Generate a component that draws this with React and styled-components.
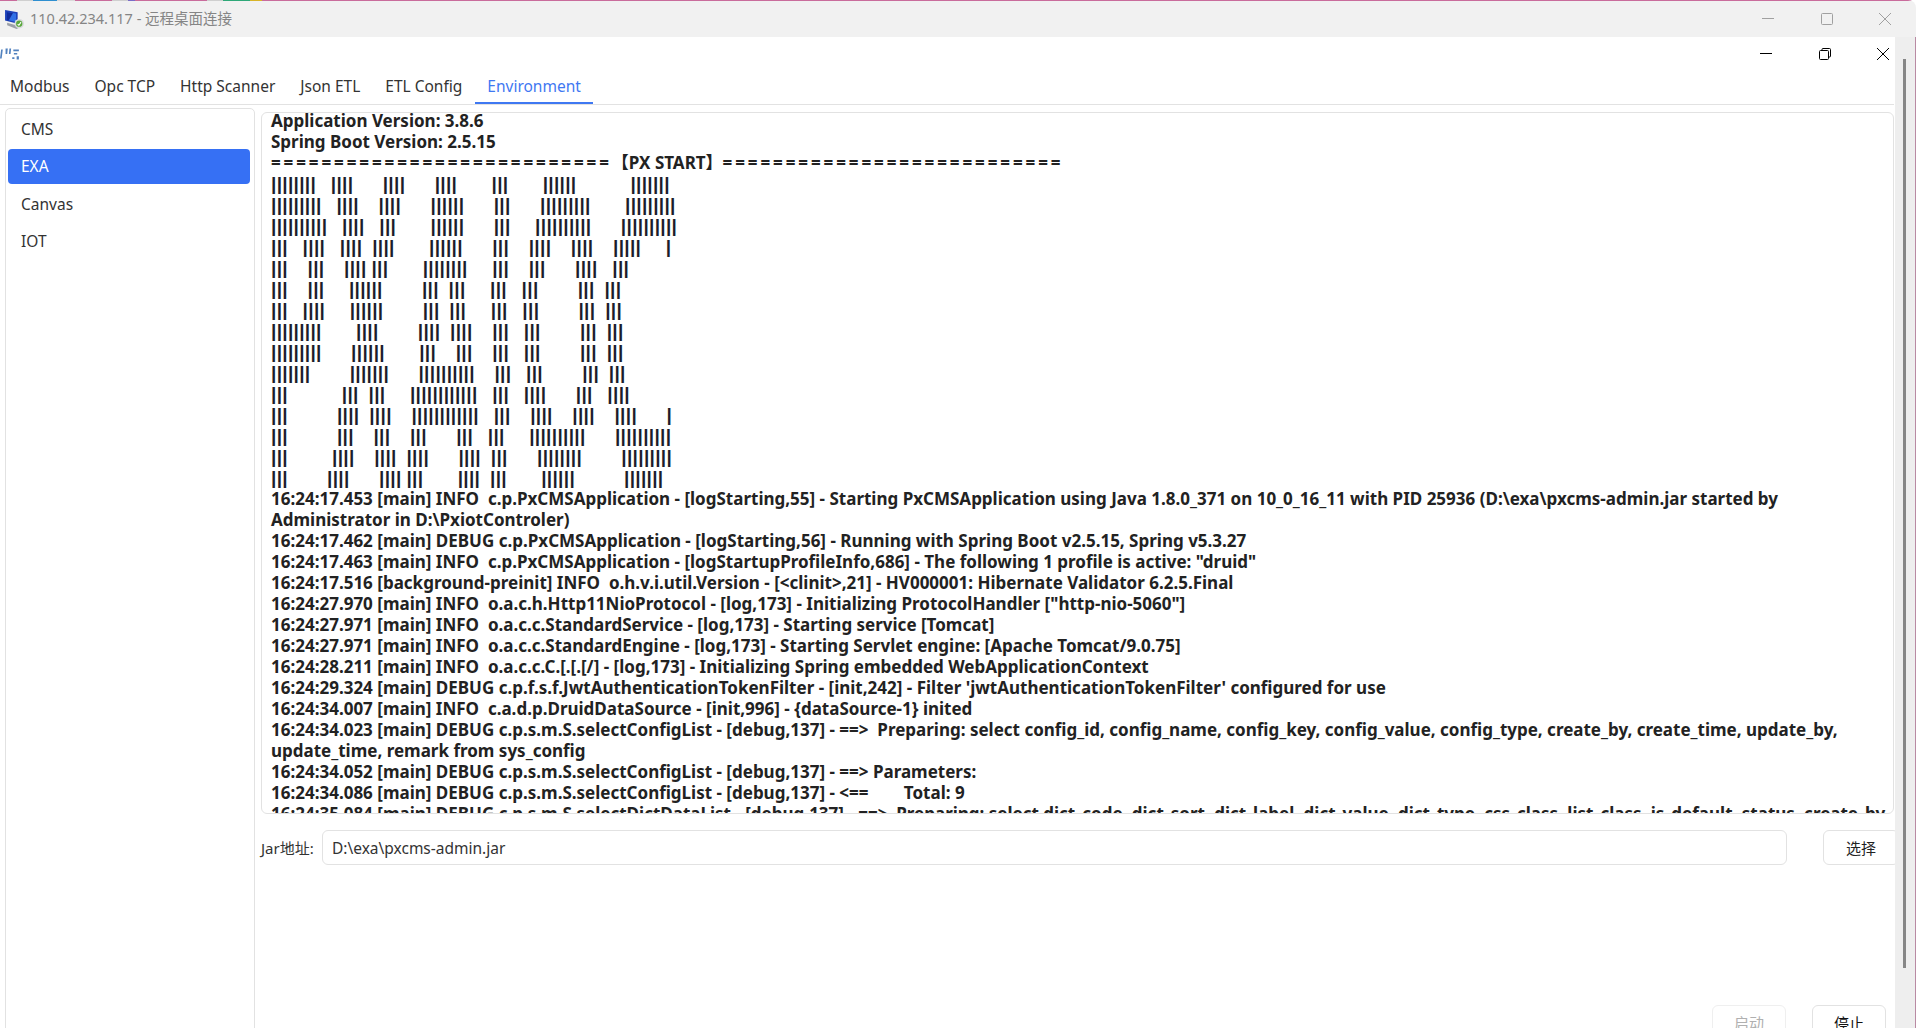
import React from 'react'
import styled, { createGlobalStyle } from 'styled-components'

const BAR_FONT = '"Liberation Sans", sans-serif'
const UI_FONT = '"Noto Sans", "Noto Sans CJK SC", sans-serif'

const GlobalStyle = createGlobalStyle`
  html, body {
    margin: 0;
    padding: 0;
    height: 100%;
    overflow: hidden;
    background: #fff;
  }
  * {
    box-sizing: border-box;
  }
`

const Page = styled.div`
  width: 1916px;
  height: 1028px;
  display: flex;
  flex-direction: column;
  overflow: hidden;
  font-family: ${UI_FONT};
  color: #333;
`
const RemoteBar = styled.div`
  height: 37px;
  flex: none;
  display: flex;
  align-items: center;
  padding: 1px 25px 0 4px;
  background: linear-gradient(#c96c9c, #c96c9c) no-repeat top / 100% 1px, #f1f1f1;
  border-top-right-radius: 8px;
  position: relative;
`
const ColorStrip = styled.div`
  position: absolute;
  top: 0;
  left: 0;
  height: 1px;
  width: 262px;
  background: linear-gradient(
    90deg,
    #c96c9c 0 17px,
    #cfcfcf 17px 33px,
    #2f8fd0 33px 57px,
    #d9d9d9 57px 75px,
    #c96c9c 75px 112px,
    #cfcfcf 112px 128px,
    #7a6cc8 128px 135px,
    #c96c9c 135px 207px,
    #cfcfcf 207px 223px,
    #2fa878 223px 250px,
    #d8b428 250px 262px
  );
`
const RemoteTitle = styled.span`
  margin-left: 5px;
  padding-bottom: 3px;
  font-size: 14.5px;
  color: #858585;
`
const WindowButtons = styled.div`
  margin-left: auto;
  display: flex;
  align-items: center;
  gap: 46.5px;
`
const Body = styled.div`
  flex: 1;
  min-height: 0;
  display: flex;
`
const AppWindow = styled.div`
  width: 1895px;
  flex: none;
  display: flex;
  flex-direction: column;
  background: #fff;
`
const Track = styled.div`
  flex: 1;
  padding: 22px 0 0 8px;
  background: #eee;
  border-right: 1px solid #b98aa3;
`
const Thumb = styled.div`
  width: 3px;
  height: 909px;
  background: #868686;
`
const AppHeader = styled.div`
  height: 33px;
  flex: none;
  display: flex;
  align-items: center;
  padding: 0 6px 0 0;
`
const TabBar = styled.div`
  height: 35px;
  flex: none;
  width: 1894px;
  display: flex;
  border-bottom: 1px solid #e2e2e2;
`
const Tab = styled.div`
  height: 34px;
  padding: 0 12.5px;
  display: flex;
  align-items: center;
  font-size: 15.5px;
  color: ${(p) => (p.$active ? '#3f78f2' : '#333')};
  border-bottom: 2px solid ${(p) => (p.$active ? '#3f78f2' : 'transparent')};
  &:first-child {
    padding-left: 10px;
  }
`
const Main = styled.div`
  flex: 1;
  min-height: 0;
  display: flex;
  padding-left: 5px;
`
const Nav = styled.nav`
  width: 250px;
  flex: none;
  margin-top: 3px;
  margin-bottom: -10px;
  padding: 3px 4px 3px 2px;
  border: 1px solid #e2e2e2;
  border-radius: 5px 5px 0 0;
  display: flex;
  flex-direction: column;
  gap: 2.3px;
`
const NavItem = styled.div`
  height: 35px;
  padding: 0 0 1px 13px;
  display: flex;
  align-items: center;
  font-size: 15.5px;
  border-radius: 4px;
  color: ${(p) => (p.$active ? '#fff' : '#333')};
  background: ${(p) => (p.$active ? '#3670f4' : 'transparent')};
`
const Content = styled.div`
  flex: 1;
  min-width: 0;
  padding: 7px 0 0 6px;
  overflow: hidden;
`
const LogBox = styled.div`
  width: 1633px;
  height: 702px;
  padding: 0 0 0 9px;
  border: 1px solid #e2e2e2;
  border-radius: 6px;
  overflow: hidden;
  font-size: 17px;
  font-weight: 700;
  line-height: 21px;
  color: #222;
`
const LogText = styled.div`
  margin-top: -3px;
`
const LogLine = styled.div`
  white-space: pre-wrap;
`
const Rule = styled.div`
  white-space: pre;
`
const RuleMark = styled.span`
  letter-spacing: 2.9px;
`
const ArtLine = styled.div`
  height: 21px;
  white-space: pre;
  font-family: ${BAR_FONT};
  font-size: 19px;
  line-height: 21px;
  letter-spacing: 0.32px;
  word-spacing: -0.7px;
  color: #1c1c2c;
`
const JarRow = styled.div`
  margin-top: 16px;
  display: flex;
  align-items: center;
  width: 1720px;
`
const JarLabel = styled.label`
  width: 61px;
  flex: none;
  font-size: 15px;
`
const JarInput = styled.input`
  width: 1465px;
  height: 35px;
  flex: none;
  padding: 0 9px;
  border: 1px solid #e2e2e2;
  border-radius: 6px;
  outline: none;
  font-family: ${UI_FONT};
  font-size: 15.5px;
  color: #333;
`
const PickButton = styled.button`
  width: 76px;
  height: 35px;
  flex: none;
  margin-left: 36px;
  border: 1px solid #e2e2e2;
  border-radius: 6px;
  background: #fff;
  font-family: ${UI_FONT};
  font-size: 15px;
  color: #222;
`
const ActionRow = styled.div`
  margin-top: 140px;
  padding-right: 9px;
  display: flex;
  justify-content: flex-end;
  gap: 26px;
`
const ActionButton = styled.button`
  width: 74px;
  height: 35px;
  border: 1px solid ${(p) => (p.disabled ? '#efefef' : '#e2e2e2')};
  border-radius: 6px;
  background: #fff;
  font-family: ${UI_FONT};
  font-size: 15px;
  color: ${(p) => (p.disabled ? '#b0b0b0' : '#111')};
`

const TABS = ['Modbus', 'Opc TCP', 'Http Scanner', 'Json ETL', 'ETL Config', 'Environment']
const NAV = ['CMS', 'EXA', 'Canvas', 'IOT']

// alternating run lengths: bars, spaces, bars, ...
const ART = [
  [8, 3, 4, 6, 4, 6, 4, 7, 3, 7, 6, 11, 7],
  [9, 3, 4, 4, 4, 6, 6, 6, 3, 6, 9, 7, 9],
  [10, 3, 4, 3, 3, 7, 6, 6, 3, 5, 10, 6, 10],
  [3, 3, 4, 3, 4, 2, 4, 7, 6, 6, 3, 4, 4, 4, 4, 4, 5, 5, 1],
  [3, 4, 3, 4, 4, 1, 3, 7, 8, 5, 3, 4, 3, 6, 4, 3, 3],
  [3, 4, 3, 5, 6, 8, 3, 2, 3, 5, 3, 3, 3, 8, 3, 2, 3],
  [3, 3, 4, 5, 6, 8, 3, 2, 3, 5, 3, 3, 3, 8, 3, 2, 3],
  [9, 7, 4, 8, 4, 2, 4, 4, 3, 3, 3, 8, 3, 2, 3],
  [9, 6, 6, 7, 3, 4, 3, 4, 3, 3, 3, 8, 3, 2, 3],
  [7, 8, 7, 6, 10, 4, 3, 3, 3, 8, 3, 2, 3],
  [3, 11, 3, 2, 3, 5, 12, 3, 3, 3, 4, 6, 3, 3, 4],
  [3, 10, 4, 2, 4, 4, 12, 3, 3, 4, 4, 4, 4, 4, 4, 6, 1],
  [3, 10, 3, 4, 3, 4, 3, 6, 3, 3, 3, 5, 10, 6, 10],
  [3, 9, 4, 4, 4, 2, 4, 6, 4, 2, 3, 6, 8, 8, 9],
  [3, 8, 4, 6, 4, 1, 3, 7, 4, 2, 3, 7, 6, 10, 7],
]

const artText = (runs) =>
  runs.map((n, i) => (i % 2 === 0 ? '|' : ' ').repeat(n)).join('')

const LOGS = [
  '16:24:17.453 [main] INFO  c.p.PxCMSApplication - [logStarting,55] - Starting PxCMSApplication using Java 1.8.0_371 on 10_0_16_11 with PID 25936 (D:\\exa\\pxcms-admin.jar started by Administrator in D:\\PxiotControler)',
  '16:24:17.462 [main] DEBUG c.p.PxCMSApplication - [logStarting,56] - Running with Spring Boot v2.5.15, Spring v5.3.27',
  '16:24:17.463 [main] INFO  c.p.PxCMSApplication - [logStartupProfileInfo,686] - The following 1 profile is active: "druid"',
  '16:24:17.516 [background-preinit] INFO  o.h.v.i.util.Version - [<clinit>,21] - HV000001: Hibernate Validator 6.2.5.Final',
  '16:24:27.970 [main] INFO  o.a.c.h.Http11NioProtocol - [log,173] - Initializing ProtocolHandler ["http-nio-5060"]',
  '16:24:27.971 [main] INFO  o.a.c.c.StandardService - [log,173] - Starting service [Tomcat]',
  '16:24:27.971 [main] INFO  o.a.c.c.StandardEngine - [log,173] - Starting Servlet engine: [Apache Tomcat/9.0.75]',
  '16:24:28.211 [main] INFO  o.a.c.c.C.[.[.[/] - [log,173] - Initializing Spring embedded WebApplicationContext',
  "16:24:29.324 [main] DEBUG c.p.f.s.f.JwtAuthenticationTokenFilter - [init,242] - Filter 'jwtAuthenticationTokenFilter' configured for use",
  '16:24:34.007 [main] INFO  c.a.d.p.DruidDataSource - [init,996] - {dataSource-1} inited',
  '16:24:34.023 [main] DEBUG c.p.s.m.S.selectConfigList - [debug,137] - ==>  Preparing: select config_id, config_name, config_key, config_value, config_type, create_by, create_time, update_by, update_time, remark from sys_config',
  '16:24:34.052 [main] DEBUG c.p.s.m.S.selectConfigList - [debug,137] - ==> Parameters: ',
  '16:24:34.086 [main] DEBUG c.p.s.m.S.selectConfigList - [debug,137] - <==        Total: 9',
  '16:24:35.084 [main] DEBUG c.p.s.m.S.selectDictDataList - [debug,137] - ==>  Preparing: select dict_code, dict_sort, dict_label, dict_value, dict_type, css_class, list_class, is_default, status, create_by,',
]

const Minimize = ({ color }) => (
  <svg width="12" height="12" viewBox="0 0 12 12">
    <path d="M0 5.5h12" stroke={color} strokeWidth="1" />
  </svg>
)
const Maximize = ({ color }) => (
  <svg width="12" height="12" viewBox="0 0 12 12" fill="none">
    <rect x="0.5" y="0.5" width="11" height="11" rx="1" stroke={color} />
  </svg>
)
const Restore = ({ color }) => (
  <svg width="12" height="12" viewBox="0 0 12 12" fill="none">
    <rect x="0.5" y="2.5" width="9" height="9" rx="1" stroke={color} />
    <path d="M3 2.5V1.5a1 1 0 0 1 1-1h6.5a1 1 0 0 1 1 1V8a1 1 0 0 1-1 1H9.5" stroke={color} />
  </svg>
)
const Close = ({ color }) => (
  <svg width="12" height="12" viewBox="0 0 12 12">
    <path d="M0 0l12 12M12 0L0 12" stroke={color} strokeWidth="1" />
  </svg>
)

const RemoteIcon = () => (
  <svg width="21" height="21" viewBox="0 0 20 20">
    <path d="M1 1l12 2v11L1 11z" fill="#1c3fb8" />
    <path d="M2.5 2.8l9 1.5v8l-9-2z" fill="#2f6fe6" />
    <path d="M2.5 2.8l6 1-4 7.2-2-.5z" fill="#0f2a9a" />
    <path d="M3 13l10 3 4-1.5v2L12 19 3 15.5z" fill="#9a9fa8" />
    <circle cx="14.5" cy="14" r="4.5" fill="#d8dadd" />
    <circle cx="14.5" cy="14" r="3" fill="#5aa83c" />
    <path d="M13 14.5l1.2 1 2-3" stroke="#fff" strokeWidth="1" fill="none" />
  </svg>
)

const AppLogo = () => (
  <svg width="20" height="14" viewBox="0 0 18 12" fill="#3f74b8" opacity="0.9">
    <path d="M1 2h1.5L1.5 10H0zM5 1h2L6.5 6H5zM8.5 1h1.5L9.5 6H8zM12 2h5v1.5h-5zM12.5 5h3v1.5h-3zM15 8h2v3h-2zM11 9h2v1.5h-2z" />
  </svg>
)

const App = () => (
  <Page>
    <GlobalStyle />
    <RemoteBar>
      <ColorStrip />
      <RemoteIcon />
      <RemoteTitle>110.42.234.117 - 远程桌面连接</RemoteTitle>
      <WindowButtons>
        <Minimize color="#a0a0a0" />
        <Maximize color="#a0a0a0" />
        <Close color="#a0a0a0" />
      </WindowButtons>
    </RemoteBar>
    <Body>
      <AppWindow>
        <AppHeader>
          <AppLogo />
          <WindowButtons>
            <Minimize color="#000" />
            <Restore color="#000" />
            <Close color="#000" />
          </WindowButtons>
        </AppHeader>
        <TabBar>
          {TABS.map((t) => (
            <Tab key={t} $active={t === 'Environment'}>
              {t}
            </Tab>
          ))}
        </TabBar>
        <Main>
          <Nav>
            {NAV.map((n) => (
              <NavItem key={n} $active={n === 'EXA'}>
                {n}
              </NavItem>
            ))}
          </Nav>
          <Content>
            <LogBox>
              <LogText>
                <LogLine>Application Version: 3.8.6</LogLine>
                <LogLine>Spring Boot Version: 2.5.15</LogLine>
                <Rule>
                  <RuleMark>{'='.repeat(27)}</RuleMark>【PX START】<RuleMark>{'='.repeat(27)}</RuleMark>
                </Rule>
                {ART.map((runs, i) => (
                  <ArtLine key={i}>{artText(runs)}</ArtLine>
                ))}
                {LOGS.map((l) => (
                  <LogLine key={l}>{l}</LogLine>
                ))}
              </LogText>
            </LogBox>
            <JarRow>
              <JarLabel>Jar地址:</JarLabel>
              <JarInput readOnly value="D:\exa\pxcms-admin.jar" />
              <PickButton>选择</PickButton>
            </JarRow>
            <ActionRow>
              <ActionButton disabled>启动</ActionButton>
              <ActionButton>停止</ActionButton>
            </ActionRow>
          </Content>
        </Main>
      </AppWindow>
      <Track>
        <Thumb />
      </Track>
    </Body>
  </Page>
)

export default App
